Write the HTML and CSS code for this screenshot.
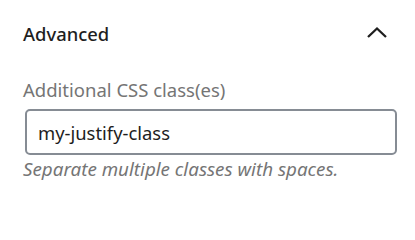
FILE: index.html
```html
<!DOCTYPE html>
<html lang="en">
<head>
<meta charset="utf-8">
<title>Advanced</title>
<link rel="stylesheet" href="styles.css">
</head>
<body>
<div class="panel">
  <div class="panel-header">
    <span class="panel-title">Advanced</span>
    <svg class="chevron" width="22" height="14" viewBox="0 0 22 14" aria-hidden="true">
      <polyline points="2,12 11,3.5 20,12" fill="none" stroke="#1e1e1e" stroke-width="2.3"/>
    </svg>
  </div>
  <div class="panel-body">
    <label class="field-label" for="cls">Additional CSS class(es)</label>
    <input id="cls" class="text-input" type="text" value="my-justify-class">
    <p class="help">Separate multiple classes with spaces.</p>
  </div>
</div>
</body>
</html>
```
FILE: styles.css
```css
html, body {
  margin: 0;
  padding: 0;
  background: #ffffff;
}
body {
  font-family: "Noto Sans", "Open Sans", sans-serif;
  color: #1e1e1e;
}
.panel {
  width: 415px;
}
.panel-header {
  height: 68px;
  display: flex;
  align-items: center;
  justify-content: space-between;
  padding: 0 27px 0 23px;
  box-sizing: border-box;
}
.panel-title {
  font-size: 18.4px;
  font-weight: 500;
  line-height: 24px;
  color: #1e1e1e;
}
.chevron {
  display: block;
  margin-top: -4px;
}
.panel-body {
  display: flex;
  flex-direction: column;
  padding: 10px 18px 0 23px;
}
.field-label {
  font-size: 18.5px;
  line-height: 24px;
  color: #757575;
  margin: 0 0 7px 0;
}
.text-input {
  box-sizing: border-box;
  width: 372px;
  height: 46px;
  margin: 0 0 0 2px;
  border: 2px solid #868c94;
  border-radius: 5px;
  padding: 0 11px;
  font-family: "Noto Sans", "Open Sans", sans-serif;
  font-size: 18.4px;
  color: #1e1e1e;
  background: #ffffff;
  outline: none;
}
.help {
  margin: 2px 0 0 0;
  font-size: 18.8px;
  line-height: 24px;
  font-style: italic;
  color: #757575;
}
```
